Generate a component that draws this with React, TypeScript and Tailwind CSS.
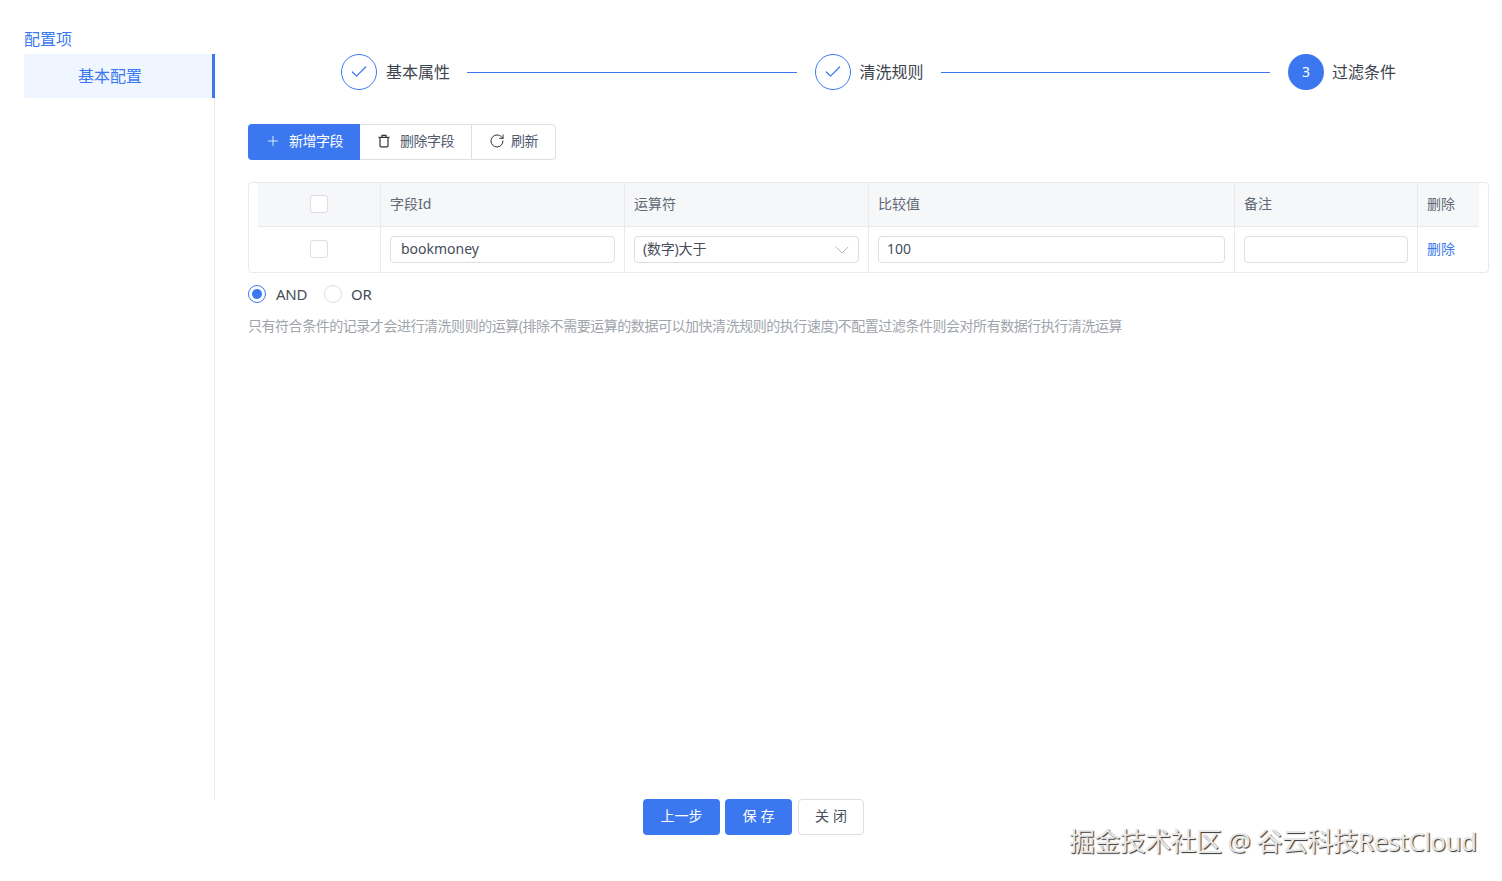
import React from 'react';
import { Plus, RotateCw, Check, ChevronDown } from 'lucide-react';

const fontStack = 'font-["Noto_Sans","Noto_Sans_CJK_SC",sans-serif]';
const headCellClass = 'flex items-center border-l border-[#e8eaec] px-[9px] pb-[3px]';
const cellClass = 'flex items-center border-l border-[#e8eaec] px-[9px]';
const inputClass = 'h-[27px] w-full rounded-[4px] border border-[#dcdee2] bg-white pb-[2px] text-[14px] text-[#474d5a] flex items-center';

const Checkbox: React.FC = () => (
  <div className="h-[18px] w-[18px] rounded-[3px] border border-[#dcdee2] bg-white" />
);

const StepLabel: React.FC<{ label: string }> = ({ label }) => (
  <span className="text-[16px] leading-none text-[#3d4450]">{label}</span>
);

const DoneStep: React.FC<{ label: string }> = ({ label }) => (
  <div className="flex items-center gap-[9px]">
    <div className="flex h-9 w-9 items-center justify-center rounded-full border border-[#3b78f0] text-[#3b78f0]">
      <Check className="h-5 w-5" strokeWidth={1.5} />
    </div>
    <StepLabel label={label} />
  </div>
);

const BucketIcon: React.FC = () => (
  <svg viewBox="0 0 14 14" className="h-[14px] w-[14px] text-[#333]" fill="none" stroke="currentColor" strokeWidth="1.2">
    <path d="M1.5 3.4h11" />
    <path d="M5 3.2V1.4h4v1.8" />
    <path d="M3 3.4v8.4c0 .6.4 1 1 1h6c.6 0 1-.4 1-1V3.4" />
  </svg>
);

const App: React.FC = () => {
  return (
    <div className={`relative h-[881px] w-[1502px] overflow-hidden bg-white ${fontStack}`}>
      <div className="flex h-[800px]">
        {/* Left menu */}
        <aside className="w-[215px] shrink-0 pl-6 pt-[29px]">
          <div className="mb-[5px] text-[16px] leading-[20px] text-[#3b78f0]">配置项</div>
          <div className="h-[746px] border-r border-[#e8eaec]">
            <div className="-mr-px flex h-[44px] items-center justify-center border-r-[3px] border-[#3b78f0] bg-[#f0f6ff] pr-[16px] text-[16px] text-[#3b78f0]">
              基本配置
            </div>
          </div>
        </aside>

        {/* Main */}
        <main className="flex-1 pt-[54px]">
          {/* Steps */}
          <div className="ml-[126px] flex w-[1055px] items-center">
            <DoneStep label="基本属性" />
            <div className="ml-[17px] mr-[18px] h-px flex-1 bg-[#3b78f0]" />
            <DoneStep label="清洗规则" />
            <div className="ml-[17px] mr-[18px] h-px flex-1 bg-[#3b78f0]" />
            <div className="flex items-center gap-[8px]">
              <div className="flex h-9 w-9 items-center justify-center rounded-full bg-[#3b78f0] pb-[1px] text-[14px] text-white">3</div>
              <StepLabel label="过滤条件" />
            </div>
          </div>

          {/* Toolbar */}
          <div className="ml-[33px] mt-[34px] flex h-9 w-fit text-[14px] tracking-[-0.5px]">
            <button className="flex w-[112px] items-center justify-center gap-[8px] rounded-l-[4px] bg-[#3b78f0] pb-[3px] text-white">
              <Plus className="h-4 w-4" strokeWidth={1.25} />
              新增字段
            </button>
            <button className="flex w-[111px] items-center justify-center gap-[9px] border-y border-[#dcdee2] pb-[3px] text-[#515a6e]">
              <BucketIcon />
              删除字段
            </button>
            <button className="flex w-[85px] items-center justify-center gap-[6px] rounded-r-[4px] border border-[#dcdee2] pb-[3px] text-[#515a6e]">
              <RotateCw className="h-4 w-4 text-[#333]" strokeWidth={1.5} />
              刷新
            </button>
          </div>

          {/* Filter table */}
          <div className="ml-[33px] mt-[22px] w-[1241px] rounded-[4px] border border-[#e8eaec] px-[9px] text-[14px]">
            <div className="grid h-[44px] grid-cols-[122px_244px_244px_366px_183px_63px] border-b border-[#e8eaec] bg-[#f6f7f9] text-[#606875]">
              <div className="flex items-center justify-center pb-[2px]"><Checkbox /></div>
              <div className={headCellClass}>字段Id</div>
              <div className={headCellClass}>运算符</div>
              <div className={headCellClass}>比较值</div>
              <div className={headCellClass}>备注</div>
              <div className={headCellClass}>删除</div>
            </div>
            <div className="grid h-[45px] grid-cols-[122px_244px_244px_366px_183px_63px]">
              <div className="flex items-center justify-center pb-[2px]"><Checkbox /></div>
              <div className={cellClass}>
                <div className={`${inputClass} pl-[10px]`}>bookmoney</div>
              </div>
              <div className={cellClass}>
                <div className={`${inputClass} justify-between pl-2 pr-[4px] text-[13px] tracking-[-0.2px]`}>
                  (数字)大于
                  <ChevronDown className="mt-[2px] h-6 w-6 text-[#aab0ba]" strokeWidth={0.9} />
                </div>
              </div>
              <div className={cellClass}>
                <div className={`${inputClass} pl-2`}>100</div>
              </div>
              <div className={cellClass}>
                <div className={inputClass} />
              </div>
              <div className={`${headCellClass} text-[#3b78f0]`}>删除</div>
            </div>
          </div>

          {/* AND / OR */}
          <div className="ml-[33px] mt-[12px] flex h-[18px] items-center text-[15px] text-[#474d5a]">
            <div className="flex h-[18px] w-[18px] items-center justify-center rounded-full border border-[#3b78f0]">
              <div className="h-[10px] w-[10px] rounded-full bg-[#3b78f0]" />
            </div>
            <span className="ml-[10px] tracking-[-0.3px]">AND</span>
            <div className="ml-[17px] h-[18px] w-[18px] rounded-full border border-[#dcdee2]" />
            <span className="ml-[9px] tracking-[-0.3px]">OR</span>
          </div>

          <p className="ml-[33px] mt-[13px] text-[14px] leading-[20px] tracking-[-0.46px] text-[#a0a4ab]">
            只有符合条件的记录才会进行清洗则则的运算(排除不需要运算的数据可以加快清洗规则的执行速度)不配置过滤条件则会对所有数据行执行清洗运算
          </p>
        </main>
      </div>

      {/* Footer */}
      <div className="-mt-px ml-[643px] flex h-9 text-[14px]">
        <button className="w-[77px] rounded-[4px] bg-[#3b78f0] pb-[3px] text-white">上一步</button>
        <button className="ml-[5px] w-[67px] rounded-[4px] bg-[#3b78f0] pb-[3px] pl-[4px] tracking-[4px] text-white">保存</button>
        <button className="ml-[6px] w-[66px] rounded-[4px] border border-[#dcdee2] pb-[3px] pl-[4px] tracking-[4px] text-[#474d5a]">关闭</button>
      </div>

      {/* Watermark */}
      <div className="absolute left-[1069px] top-[823px] text-[26px] leading-[36px] tracking-[-0.6px] text-[#e8e8e8] [text-shadow:1px_1px_1px_#333]">
        掘金技术社区 @ 谷云科技RestCloud
      </div>
    </div>
  );
};

export default App;
